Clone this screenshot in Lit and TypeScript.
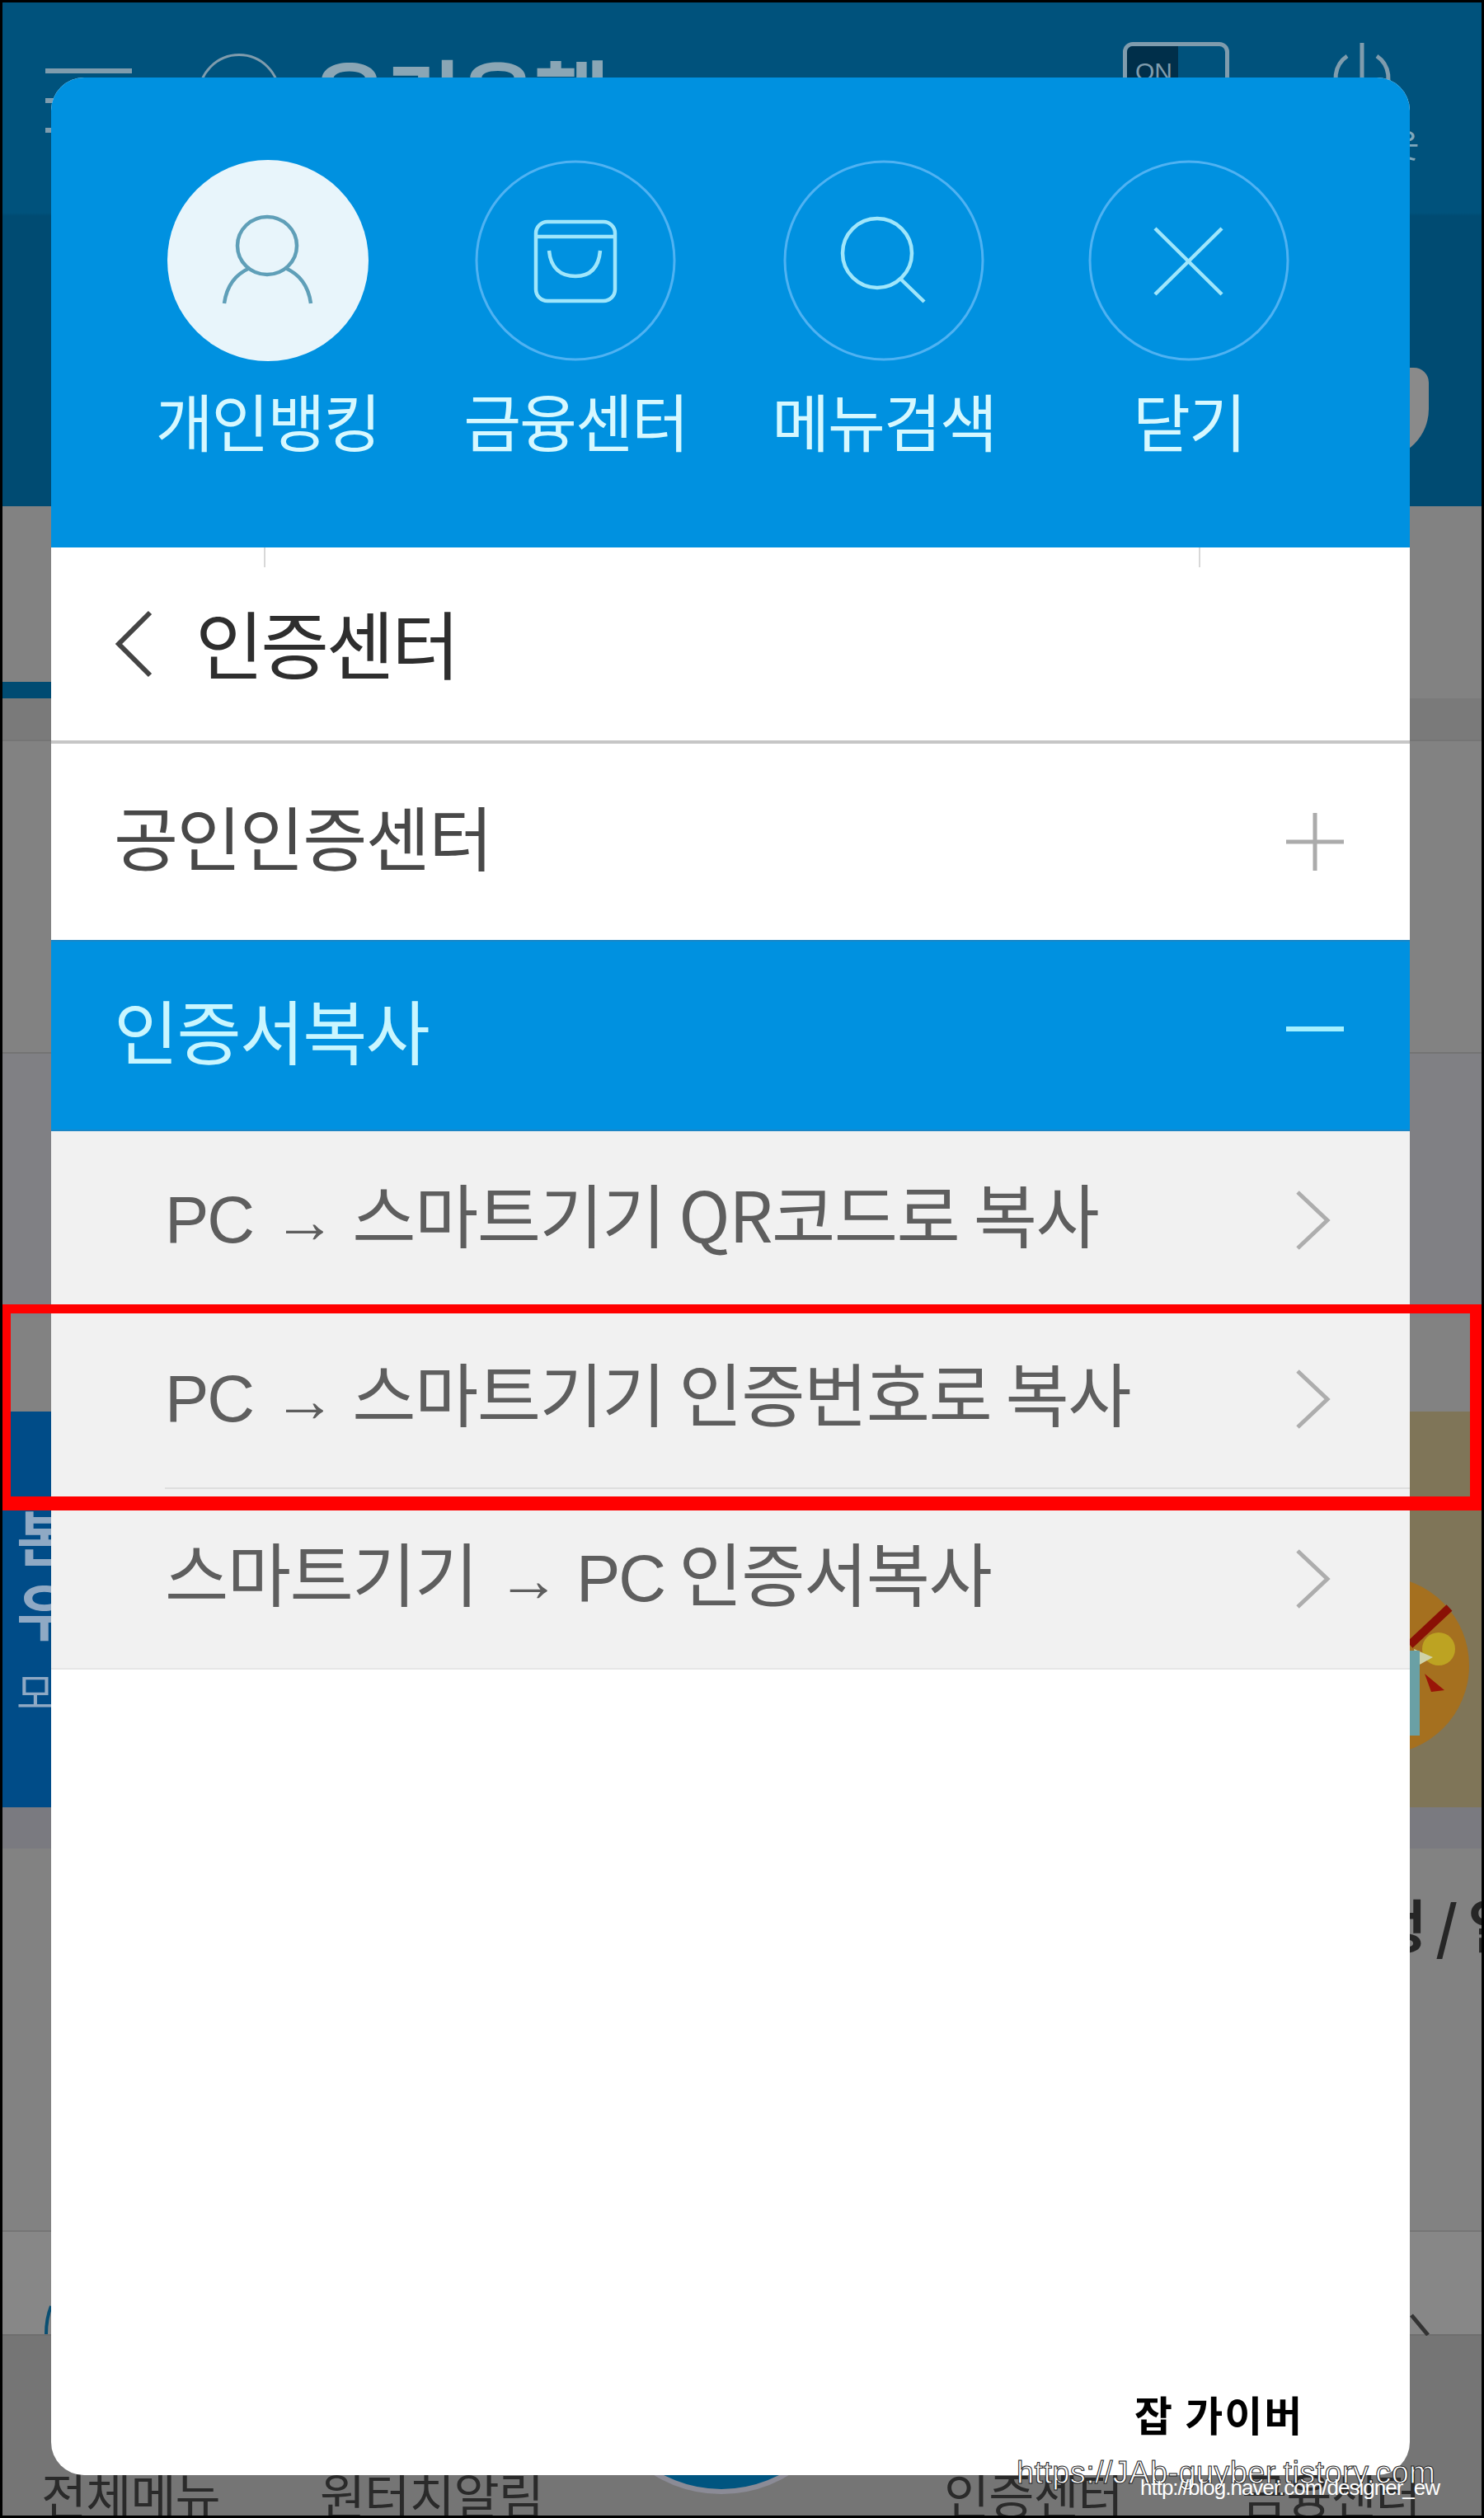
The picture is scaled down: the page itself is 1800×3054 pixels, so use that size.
import { LitElement, html, css } from "lit";
import { customElement } from "lit/decorators.js";

@customElement("app-root")
export class AppRoot extends LitElement {
  static styles = css`
    :host { display: block; width: 1800px; height: 3054px; position: relative; overflow: hidden; background: #808080; font-family: "Noto Sans CJK KR", "Liberation Sans", sans-serif; }
    * { box-sizing: border-box; }
    svg { display: block; }

    /* page dimmed behind the dialog */
    .page { display: flex; flex-direction: column; height: 3054px; }
    .top { height: 614px; background: linear-gradient(#00527c 0, #00527c 258px, #004b72 262px, #004b72 100%); position: relative; flex: none; }
    .appbar { display: flex; align-items: flex-start; padding: 51px 0 0 55px; height: 200px; position: relative; }
    .burger { width: 105px; display: flex; flex-direction: column; gap: 30px; padding-top: 32px; }
    .burger i { display: block; height: 6px; background: #7f9cad; }
    .logo { width: 100px; height: 100px; border: 3px solid #7f9cad; border-radius: 50%; margin: 14px 0 0 80px; flex: none; }
    .bank { color: #8aa6b5; font-size: 100px; font-weight: 700; margin: -2px 0 0 38px; line-height: 130px; white-space: nowrap; letter-spacing: -2px; }
    .toggle { position: absolute; left: 1362px; top: 51px; width: 129px; height: 80px; border: 5px solid #7f9cad; border-radius: 12px; overflow: hidden; }
    .toggle b { display: block; width: 62px; height: 100%; background: #002f4a; color: #7f9cad; font: 400 30px "Liberation Sans", sans-serif; padding: 14px 0 0 10px; }
    .power { position: absolute; left: 1612px; top: 50px; }
    .logout { position: absolute; left: 1574px; top: 148px; color: #7fa8bd; font-size: 40px; white-space: nowrap; line-height: 52px; letter-spacing: 0; }
    .hand { position: absolute; left: 1660px; top: 446px; width: 73px; height: 110px; background: #8a8a8a; border-radius: 10px 18px 60px 10px; }

    .tabs { height: 233px; background: #828282; flex: none; }
    .tab-mark { width: 120px; height: 20px; background: #004b72; margin-top: 213px; }
    .tab-low { height: 52px; background: #7a7a7a; border-bottom: 2px solid #757575; flex: none; }
    .mid { height: 813px; background: #828282; flex: none; }
    .mid-a { height: 379px; border-bottom: 2px solid #747474; }
    .mid-b { height: 320px; background: #808084; }
    .promo { height: 480px; display: flex; flex: none; position: relative; }
    .promo-l { width: 400px; background: #004c88; color: #8fa9c4; padding: 106px 0 0 20px; font-weight: 700; }
    .promo-l div { font-size: 74px; line-height: 86px; white-space: nowrap; margin-bottom: 4px; }
    .promo-l div.small { font-size: 50px; line-height: 60px; font-weight: 400; margin-top: 26px; }
    .promo-r { flex: 1; background: #7f7558; }
    .coin { position: absolute; left: 1560px; top: 176px; }
    .under { flex: 1; position: relative; display: flex; flex-direction: column; }
    .u-a { height: 50px; background: #7a7a80; flex: none; }
    .u-b { height: 465px; background: #828282; border-bottom: 2px solid #757575; flex: none; padding: 46px 0 0 1665px; font-size: 70px; font-weight: 700; color: #262626; line-height: 90px; white-space: nowrap; letter-spacing: 12px; }
    .u-c { height: 126px; background: #878787; border-bottom: 2px solid #6f6f6f; flex: none; }
    .u-d { flex: 1; background: #757575; display: flex; align-items: flex-start; padding: 155px 0 0 50px; overflow: hidden; position: relative; }
    .nav { font-size: 60px; line-height: 72px; color: #2a2a2a; white-space: nowrap; letter-spacing: -1px; flex: none; }
    .nav.n1 { width: 338px; }
    .nav.n2 { width: 757px; }
    .nav.n3 { width: 361px; }
    .fab { position: absolute; left: 717px; top: 0; width: 316px; height: 316px; border-radius: 50%; background: #005580; border: 6px solid #8b8b96; margin-top: -124px; }
    .arc { position: absolute; }

    /* dialog */
    .dialog { position: absolute; left: 62px; top: 94px; width: 1648px; height: 2908px; background: #fff; border-radius: 40px; overflow: hidden; display: flex; flex-direction: column; }
    .head { height: 570px; flex: none; background: #0091e0; display: grid; grid-template-columns: 373px 374px 374px 366px; padding: 100px 0 0 76px; }
    .shortcut { display: flex; flex-direction: column; align-items: center; }
    .circle { width: 244px; height: 244px; }
    .shortcut span { font-size: 76px; line-height: 90px; letter-spacing: -2px; color: #d6f8ff; margin-top: 26px; white-space: nowrap; }
    .title { height: 238px; flex: none; border-bottom: 4px solid #c6c6c6; display: flex; align-items: center; padding: 0 0 0 76px; position: relative; color: #2e2e2e; font-size: 90px; letter-spacing: -3.5px; }
    .title svg { margin-right: 51px; }
    .title span { line-height: 100px; margin-top: -6px; }
    .tick { position: absolute; top: 0; width: 2px; height: 24px; background: #d8d8d8; }
    .t1 { left: 258px; }
    .t2 { left: 1392px; }
    .section { display: flex; align-items: center; justify-content: space-between; flex: none; padding: 0 78px 0 76px; font-size: 85px; letter-spacing: -1.8px; line-height: 100px; }
    .section.a { height: 238px; color: #484848; }
    .section.b { height: 232px; background: #0091e0; color: #c9f6ff; border-top: 2px solid #1b86c6; border-bottom: 2px solid #1b86c6; }
    .section span { margin-top: -16px; }
    .section.b svg { margin-top: -16px; }
    .list { flex: none; background: #f1f1f1; border-bottom: 2px solid #e6e6e6; }
    .row { height: 217px; margin-left: 138px; padding-right: 94px; display: flex; align-items: center; justify-content: space-between; border-bottom: 2px solid #dedede; color: #5e5e5e; font-size: 84px; letter-spacing: -1.5px; }
    .row:last-child { border-bottom: 0; }
    .row .txt { white-space: nowrap; margin-top: -8px; line-height: 100px; margin-left: 0; }
    .row .arrow { font-family: "Liberation Sans", sans-serif; font-size: 76px; letter-spacing: 0; margin: 0 20px 0 24px; }
    .row .pc { font-family: "Liberation Sans", sans-serif; font-size: 80px; letter-spacing: -2px; }
    .row svg { flex: none; }

    /* overlays */
    .redbox { position: absolute; left: 3px; top: 1582px; width: 1794px; height: 250px; border-style: solid; border-color: #ff0000; border-width: 11px 14px 17px 10px; }
    .wm-name { position: absolute; left: 1376px; top: 2890px; font-size: 50px; font-weight: 700; color: #000; line-height: 74px; white-space: nowrap; letter-spacing: 2px; }
    .wm-url { position: absolute; left: 1233px; top: 2976px; font: 400 38px/46px "Liberation Sans", sans-serif; color: #fff; -webkit-text-stroke: 1px #222; white-space: nowrap; letter-spacing: 0.35px; }
    .wm-blog { position: absolute; left: 1383px; top: 3002px; font: 400 26px/30px "Liberation Sans", sans-serif; color: #fff; white-space: nowrap; letter-spacing: -1px; }
    .frame { position: absolute; inset: 0; border: 3px solid #000; pointer-events: none; }
  `;

  private chevron() {
    return html`<svg width="48" height="80" viewBox="0 0 48 80" fill="none" stroke="#adadad" stroke-width="5"><path d="M6 6 L42 40 L6 74" /></svg>`;
  }

  private rowText(parts: string[]) {
    return parts.map((p) => (p === "→" ? html`<span class="arrow">→</span>` : p === "PC" ? html`<span class="pc">PC</span>` : p));
  }

  render() {
    const ring = "#4fb2f2";
    const line = "#9fe6fb";
    const rows = [
      ["PC", "→", "스마트기기 QR코드로 복사"],
      ["PC", "→", "스마트기기 인증번호로 복사"],
      ["스마트기기", "→", "PC", " 인증서복사"],
    ];
    return html`
      <div class="page">
        <div class="top">
          <div class="appbar">
            <div class="burger"><i></i><i></i><i></i></div>
            <div class="logo"></div>
            <div class="bank">우리은행</div>
          </div>
          <div class="toggle"><b>ON</b></div>
          <svg class="power" width="80" height="90" viewBox="0 0 80 90" fill="none" stroke="#7f9cad" stroke-width="5"><path d="M22 18 A32 32 0 1 0 58 18" /><path d="M40 2 V44" /></svg>
          <div class="logout">로그아웃</div>
          <div class="hand"></div>
        </div>
        <div class="tabs"><div class="tab-mark"></div></div>
        <div class="tab-low"></div>
        <div class="mid"><div class="mid-a"></div><div class="mid-b"></div></div>
        <div class="promo">
          <div class="promo-l"><div>본</div><div>우</div><div class="small">모</div></div>
          <div class="promo-r"></div>
          <svg class="coin" width="240" height="250" viewBox="0 0 240 250">
            <circle cx="114" cy="132" r="108" fill="#a5701f" />
            <circle cx="185" cy="112" r="20" fill="#bda322" />
            <path d="M155 112 L178 122 L160 132 Z" fill="#cfd2a8" />
            <path d="M150 107 L198 62" stroke="#8a1005" stroke-width="10" />
            <path d="M168 142 L192 162 L176 164 Z" fill="#9a1508" />
            <rect x="150" y="114" width="12" height="103" fill="#6aa0a5" />
          </svg>
        </div>
        <div class="under">
          <div class="u-a"></div>
          <div class="u-b">행/일</div>
          <div class="u-c">
            <svg class="arc" style="left:52px;top:603px" width="12" height="38" viewBox="0 0 12 38" fill="none" stroke="#0a4f72" stroke-width="4"><path d="M10 2 C6 12 4 24 4 36" /></svg>
            <svg class="arc" style="left:1708px;top:614px" width="28" height="28" viewBox="0 0 28 28" fill="none" stroke="#333" stroke-width="5"><path d="M4 2 L24 26" /></svg>
          </div>
          <div class="u-d">
            <div class="fab"></div>
            <div class="nav n1">전체메뉴</div>
            <div class="nav n2">원터치알림</div>
            <div class="nav n3">인증센터</div>
            <div class="nav">금융센터</div>
          </div>
        </div>
      </div>

      <div class="dialog">
        <div class="head">
          <div class="shortcut">
            <svg class="circle" viewBox="0 0 244 244" fill="none">
              <circle cx="122" cy="122" r="122" fill="#e8f5fb" />
              <g stroke="#5f9fb8" stroke-width="4.5"><ellipse cx="121" cy="104" rx="36" ry="35" /><path d="M69 174 C72 152 84 138 100 131" /><path d="M174 174 C171 152 159 138 143 131" /></g>
            </svg>
            <span>개인뱅킹</span>
          </div>
          <div class="shortcut">
            <svg class="circle" viewBox="0 0 244 244" fill="none">
              <circle cx="122" cy="122" r="120" stroke="${ring}" stroke-width="3" />
              <g stroke="${line}" stroke-width="4.5"><rect x="74" y="75" width="96" height="96" rx="14" /><path d="M74 93 H170" /><path d="M90 110 C92 132 105 141 122 141 C139 141 150 132 152 110" /></g>
            </svg>
            <span>금융센터</span>
          </div>
          <div class="shortcut">
            <svg class="circle" viewBox="0 0 244 244" fill="none">
              <circle cx="122" cy="122" r="120" stroke="${ring}" stroke-width="3" />
              <g stroke="${line}" stroke-width="4.5"><circle cx="114" cy="113" r="42" /><path d="M141 143 L171 172" /></g>
            </svg>
            <span>메뉴검색</span>
          </div>
          <div class="shortcut">
            <svg class="circle" viewBox="0 0 244 244" fill="none">
              <circle cx="122" cy="122" r="120" stroke="${ring}" stroke-width="3" />
              <g stroke="${line}" stroke-width="4.5"><path d="M81 83 L162 163" /><path d="M162 83 L81 163" /></g>
            </svg>
            <span>닫기</span>
          </div>
        </div>
        <div class="title">
          <i class="tick t1"></i><i class="tick t2"></i>
          <svg width="48" height="84" viewBox="0 0 48 84" fill="none" stroke="#444" stroke-width="6"><path d="M44 4 L6 42 L44 80" /></svg>
          <span>인증센터</span>
        </div>
        <div class="section a">
          <span>공인인증센터</span>
          <svg width="74" height="74" viewBox="0 0 74 74" fill="none" stroke="#ababab" stroke-width="5"><path d="M2 37 H72" /><path d="M37 2 V72" /></svg>
        </div>
        <div class="section b">
          <span>인증서복사</span>
          <svg width="74" height="10" viewBox="0 0 74 10" fill="none" stroke="#a4f0ff" stroke-width="6"><path d="M2 5 H72" /></svg>
        </div>
        <div class="list">
          ${rows.map((r) => html`<div class="row"><span class="txt">${this.rowText(r)}</span>${this.chevron()}</div>`)}
        </div>
      </div>

      <div class="redbox"></div>
      <div class="wm-name">잡 가이버</div>
      <div class="wm-url">https://JAb-guyber.tistory.com</div>
      <div class="wm-blog">http://blog.naver.com/designer_ew</div>
      <div class="frame"></div>
    `;
  }
}
